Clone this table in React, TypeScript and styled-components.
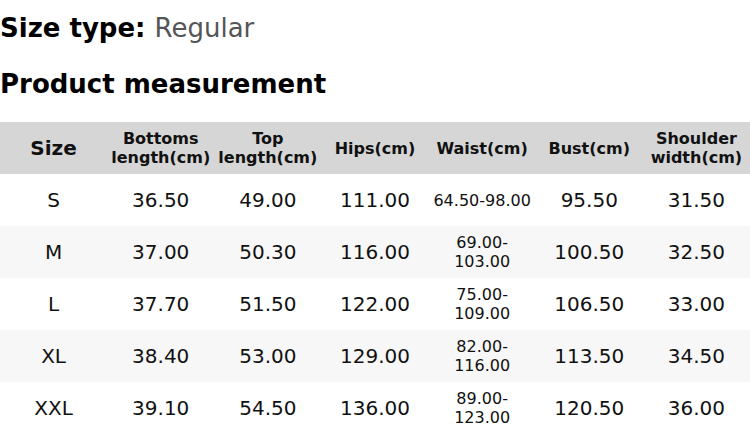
import React from 'react'
import styled, { createGlobalStyle } from 'styled-components'

const GlobalStyle = createGlobalStyle`
  html, body {
    margin: 0;
    padding: 0;
    background: #ffffff;
  }
  body {
    font-family: 'DejaVu Sans', 'Liberation Sans', sans-serif;
    color: #111111;
  }
`

const Page = styled.div`
  width: 750px;
  display: flex;
  flex-direction: column;
`

const Title = styled.h2`
  margin: 0;
  font-size: 26px;
  line-height: 32px;
  font-weight: bold;
  color: #000000;
`

const SizeTypeLine = styled(Title)`
  margin-top: 12px;
`

const MeasureTitle = styled(Title)`
  margin-top: 24px;
`

const Value = styled.span`
  font-weight: normal;
  color: #555555;
`

const Table = styled.table`
  margin-top: 22px;
  width: 750px;
  border-collapse: collapse;
  table-layout: fixed;
`

const HeadCell = styled.th<{ $big?: boolean }>`
  height: 52px;
  padding: 0;
  background: #d6d6d6;
  font-size: ${({ $big }) => ($big ? '20px' : '16px')};
  line-height: 19px;
  font-weight: bold;
  color: #111111;
  text-align: center;
  vertical-align: middle;
`

const Row = styled.tr<{ $shaded: boolean }>`
  background: ${({ $shaded }) => ($shaded ? '#f7f7f7' : '#ffffff')};
`

const Cell = styled.td<{ $small?: boolean }>`
  height: 52px;
  padding: 0;
  font-size: ${({ $small }) => ($small ? '16px' : '20px')};
  line-height: 19px;
  color: #111111;
  text-align: center;
  vertical-align: middle;
`

const headers = [
  'Size',
  'Bottoms length(cm)',
  'Top length(cm)',
  'Hips(cm)',
  'Waist(cm)',
  'Bust(cm)',
  'Shoulder width(cm)',
]

const rows = [
  ['S', '36.50', '49.00', '111.00', '64.50-98.00', '95.50', '31.50'],
  ['M', '37.00', '50.30', '116.00', '69.00-103.00', '100.50', '32.50'],
  ['L', '37.70', '51.50', '122.00', '75.00-109.00', '106.50', '33.00'],
  ['XL', '38.40', '53.00', '129.00', '82.00-116.00', '113.50', '34.50'],
  ['XXL', '39.10', '54.50', '136.00', '89.00-123.00', '120.50', '36.00'],
]

const App = () => (
  <Page>
    <GlobalStyle />
    <SizeTypeLine>
      Size type: <Value>Regular</Value>
    </SizeTypeLine>
    <MeasureTitle>Product measurement</MeasureTitle>
    <Table>
      <thead>
        <tr>
          {headers.map((h, i) => (
            <HeadCell key={h} $big={i === 0}>
              {h}
            </HeadCell>
          ))}
        </tr>
      </thead>
      <tbody>
        {rows.map((r, ri) => (
          <Row key={r[0]} $shaded={ri % 2 === 1}>
            {r.map((v, ci) => (
              <Cell key={ci} $small={ci === 4}>
                {v}
              </Cell>
            ))}
          </Row>
        ))}
      </tbody>
    </Table>
  </Page>
)

export default App
